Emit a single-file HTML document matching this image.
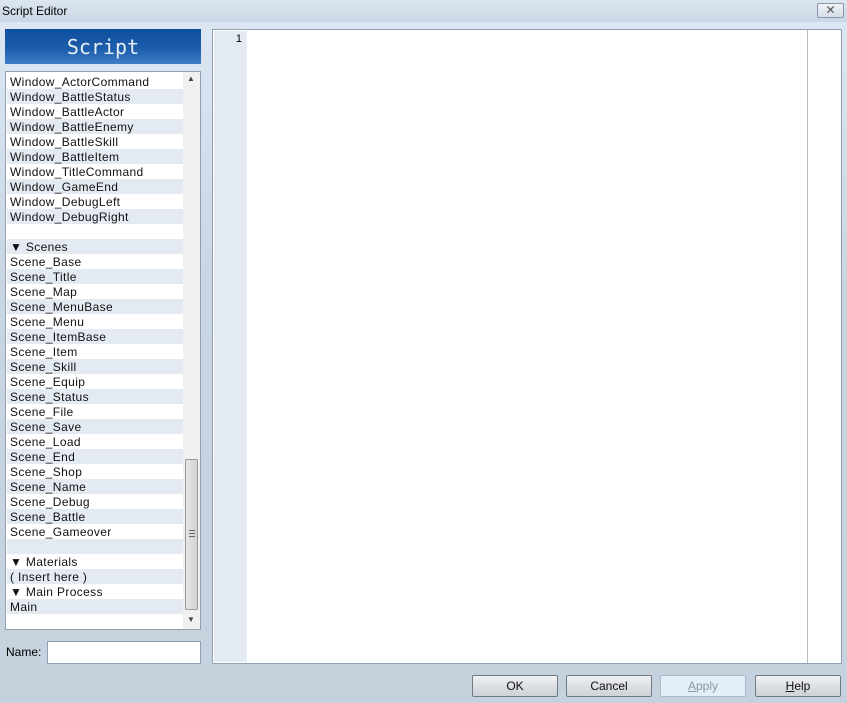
<!DOCTYPE html>
<html><head><style>
*{margin:0;padding:0;box-sizing:border-box}
body{width:847px;height:703px;overflow:hidden;position:relative;font-family:"Liberation Sans",sans-serif;font-size:12px;background:linear-gradient(#dde8f4,#c9d6e2 40%,#c5d1dd);}
.title{position:absolute;left:0;top:0;width:847px;height:22px;background:linear-gradient(#dce6f1,#c9d6e3);}
.title span{position:absolute;left:2px;top:4px;font-size:12px;color:#000}
.close{position:absolute;left:817px;top:3px;width:27px;height:15px;border:1px solid #8a97a6;border-radius:2px;background:linear-gradient(#f0f3f7,#d5dde7);font-size:12px;text-align:center;line-height:12px;color:#555}
.hdr{position:absolute;left:5px;top:29px;width:196px;height:35px;background:linear-gradient(#0d4f9c,#1e5fad 60%,#3f7cc6);color:#e8eef6;font-family:"DejaVu Sans Mono",monospace;font-size:20px;text-align:center;line-height:36px}
.list{position:absolute;left:5px;top:71px;width:196px;height:559px;border:1px solid #8fa0b3;background:#fff;overflow:hidden}
.row{position:absolute;left:1px;width:177px;height:15px;line-height:16px;padding-left:3px;font-size:12px;letter-spacing:0.35px;color:#111;white-space:nowrap}
.alt{background:#e3eaf2}
.sb{position:absolute;left:177px;top:0;width:17px;height:557px;background:#f0f0f0}
.thumb{position:absolute;left:179px;top:387px;width:13px;height:151px;border:1px solid #999;border-radius:2px;background:linear-gradient(90deg,#e6e6e6,#d2d2d2)}
.ed{position:absolute;left:212px;top:29px;width:630px;height:635px;border:1px solid #8fa0b3;background:#fff}
.gut{position:absolute;left:1px;top:1px;width:33px;height:631px;background:#e3eaf2;font-size:11px;text-align:right;padding-right:5px;line-height:17px}
.vl{position:absolute;left:594px;top:0;width:1px;height:633px;background:#bbb}
.lbl{position:absolute;left:6px;top:645px}
.inp{position:absolute;left:47px;top:641px;width:154px;height:23px;border:1px solid #8fa0b3;background:#fff}
.btn{position:absolute;top:675px;width:86px;height:22px;border:1px solid #707a86;border-radius:2px;background:linear-gradient(#f2f3f5,#dcdfe3 50%,#cfd3d8);text-align:center;line-height:20px;font-size:12px;color:#111}
.dis{border-color:#a9b9cc;background:#e4eef9;color:#8a96a4}
</style></head><body>
<div class="title"><span>Script Editor</span><div class="close">✕</div></div>
<div class="hdr">Script</div>
<div class="list">
<div class="row" style="top:2px">Window_ActorCommand</div>
<div class="row alt" style="top:17px">Window_BattleStatus</div>
<div class="row" style="top:32px">Window_BattleActor</div>
<div class="row alt" style="top:47px">Window_BattleEnemy</div>
<div class="row" style="top:62px">Window_BattleSkill</div>
<div class="row alt" style="top:77px">Window_BattleItem</div>
<div class="row" style="top:92px">Window_TitleCommand</div>
<div class="row alt" style="top:107px">Window_GameEnd</div>
<div class="row" style="top:122px">Window_DebugLeft</div>
<div class="row alt" style="top:137px">Window_DebugRight</div>
<div class="row" style="top:152px"></div>
<div class="row alt" style="top:167px">▼ Scenes</div>
<div class="row" style="top:182px">Scene_Base</div>
<div class="row alt" style="top:197px">Scene_Title</div>
<div class="row" style="top:212px">Scene_Map</div>
<div class="row alt" style="top:227px">Scene_MenuBase</div>
<div class="row" style="top:242px">Scene_Menu</div>
<div class="row alt" style="top:257px">Scene_ItemBase</div>
<div class="row" style="top:272px">Scene_Item</div>
<div class="row alt" style="top:287px">Scene_Skill</div>
<div class="row" style="top:302px">Scene_Equip</div>
<div class="row alt" style="top:317px">Scene_Status</div>
<div class="row" style="top:332px">Scene_File</div>
<div class="row alt" style="top:347px">Scene_Save</div>
<div class="row" style="top:362px">Scene_Load</div>
<div class="row alt" style="top:377px">Scene_End</div>
<div class="row" style="top:392px">Scene_Shop</div>
<div class="row alt" style="top:407px">Scene_Name</div>
<div class="row" style="top:422px">Scene_Debug</div>
<div class="row alt" style="top:437px">Scene_Battle</div>
<div class="row" style="top:452px">Scene_Gameover</div>
<div class="row alt" style="top:467px"></div>
<div class="row" style="top:482px">▼ Materials</div>
<div class="row alt" style="top:497px">( Insert here )</div>
<div class="row" style="top:512px">▼ Main Process</div>
<div class="row alt" style="top:527px">Main</div>
<div class="sb"></div>
<div style="position:absolute;left:181px;top:2px;font-size:8px;color:#444">▲</div>
<div class="thumb"><div style="position:absolute;left:3px;top:70px;width:6px;height:7px;border-top:1px solid #666;border-bottom:1px solid #666"><div style="margin-top:2px;height:1px;background:#666"></div></div></div>
<div style="position:absolute;left:181px;top:543px;font-size:8px;color:#444">▼</div>
</div>
<div class="ed"><div class="gut">1</div><div class="vl"></div></div>
<div class="lbl">Name:</div>
<div class="inp"></div>
<div class="btn" style="left:472px">OK</div>
<div class="btn" style="left:566px">Cancel</div>
<div class="btn dis" style="left:660px"><u>A</u>pply</div>
<div class="btn" style="left:755px"><u>H</u>elp</div>
</body></html>
